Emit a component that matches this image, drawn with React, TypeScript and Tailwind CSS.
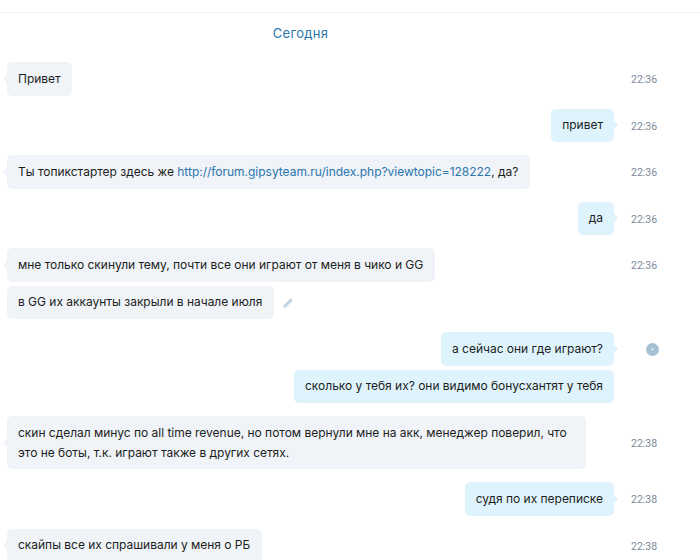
const ff = "font-['Inter','Noto_Sans',sans-serif]";

function Time({ t }: { t?: string }) {
  return (
    <div className="w-[69px] shrink-0 pl-[17px] pt-[3px] flex items-center font-['Roboto','Noto_Sans',sans-serif] text-[10.5px] text-[#7d8898]">
      {t}
    </div>
  );
}

function Tail({ side, color }: { side: 'l' | 'r'; color: string }) {
  return (
    <span
      className={`absolute top-1/2 -mt-[3px] w-[6px] h-[6px] rotate-45 rounded-[1px] ${color} ${side === 'l' ? '-left-[3px]' : '-right-[3px]'}`}
    />
  );
}

function In({ children, t, tail = true, mt = 13, after, tall }: { children: React.ReactNode; t?: string; tail?: boolean; mt?: number; after?: React.ReactNode; tall?: boolean }) {
  return (
    <div className="flex" style={{ marginTop: mt }}>
      <div className="flex-1 flex items-center min-w-0 pl-[7px]">
        <div className={`relative bg-[#f0f3f8] rounded-[5px] pl-[11px] pr-[11.5px] text-[12px] tracking-[-0.02px] text-[#1c1e21] flex items-center ${tall ? 'leading-[20px] h-[53px] w-[579px]' : 'h-[33.5px]'}`}>
          {tail && <Tail side="l" color="bg-[#f0f3f8]" />}
          <div>{children}</div>
        </div>
        {after}
      </div>
      <Time t={t} />
    </div>
  );
}

function Out({ children, t, tail = true, mt = 13, side }: { children: React.ReactNode; t?: string; tail?: boolean; mt?: number; side?: React.ReactNode }) {
  return (
    <div className="flex" style={{ marginTop: mt }}>
      <div className="flex-1 flex justify-end min-w-0">
        <div className="relative bg-[#dff3fd] rounded-[5px] pl-[11px] pr-[11px] h-[33.5px] flex items-center text-[12px] tracking-[-0.02px] text-[#1c1e21]">
          {tail && <Tail side="r" color="bg-[#dff3fd]" />}
          {children}
        </div>
      </div>
      {side ?? <Time t={t} />}
    </div>
  );
}

export default function App() {
  return (
    <div className={`w-[700px] h-[560px] overflow-hidden bg-white ${ff}`}>
      <div className="mt-[12px] border-t border-[#edf0f5] w-full h-0" />
      <div className="w-[601px] text-center text-[13px] text-[#2b76ad] leading-[17px] mt-[12px] tracking-[0.3px]">Сегодня</div>
      <div className="w-[683px] pb-4">
        <In t="22:36" mt={20}>Привет</In>
        <Out t="22:36">привет</Out>
        <In t="22:36">
          Ты топикстартер здесь же <span className="text-[#2b76ad]">http://forum.gipsyteam.ru/index.php?viewtopic=128222</span>, да?
        </In>
        <Out t="22:36">да</Out>
        <In t="22:36">мне только скинули тему, почти все они играют от меня в чико и GG</In>
        <In
          tail={false}
          mt={4}
          after={
            <svg className="ml-[8px] mt-[2px] w-[12px] h-[12px]" viewBox="0 0 12 12" fill="#c0d4e4">
              <path d="M8.6 1.2 L10.8 3.4 L4 10.2 L1 11 L1.8 8 Z" />
            </svg>
          }
        >
          в GG их аккаунты закрыли в начале июля
        </In>
        <Out
          side={
            <div className="w-[69px] shrink-0 pl-[32px] flex items-center">
              <svg className="w-[13px] h-[13px] mt-[2px]" viewBox="0 0 13 13">
                <circle cx="6.5" cy="6.5" r="6.5" fill="#a6c1d3" />
                <path d="M5 5.8 H8 L6.5 7.8 Z" fill="#fff" />
              </svg>
            </div>
          }
        >
          а сейчас они где играют?
        </Out>
        <Out tail={false} mt={4} side={<Time />}>сколько у тебя их? они видимо бонусхантят у тебя</Out>
        <In t="22:38" tall>
          скин сделал минус по all time revenue, но потом вернули мне на акк, менеджер поверил, что<br />
          это не боты, т.к. играют также в других сетях.
        </In>
        <Out t="22:38">судя по их переписке</Out>
        <In t="22:38">скайпы все их спрашивали у меня о РБ</In>
      </div>
    </div>
  );
}
